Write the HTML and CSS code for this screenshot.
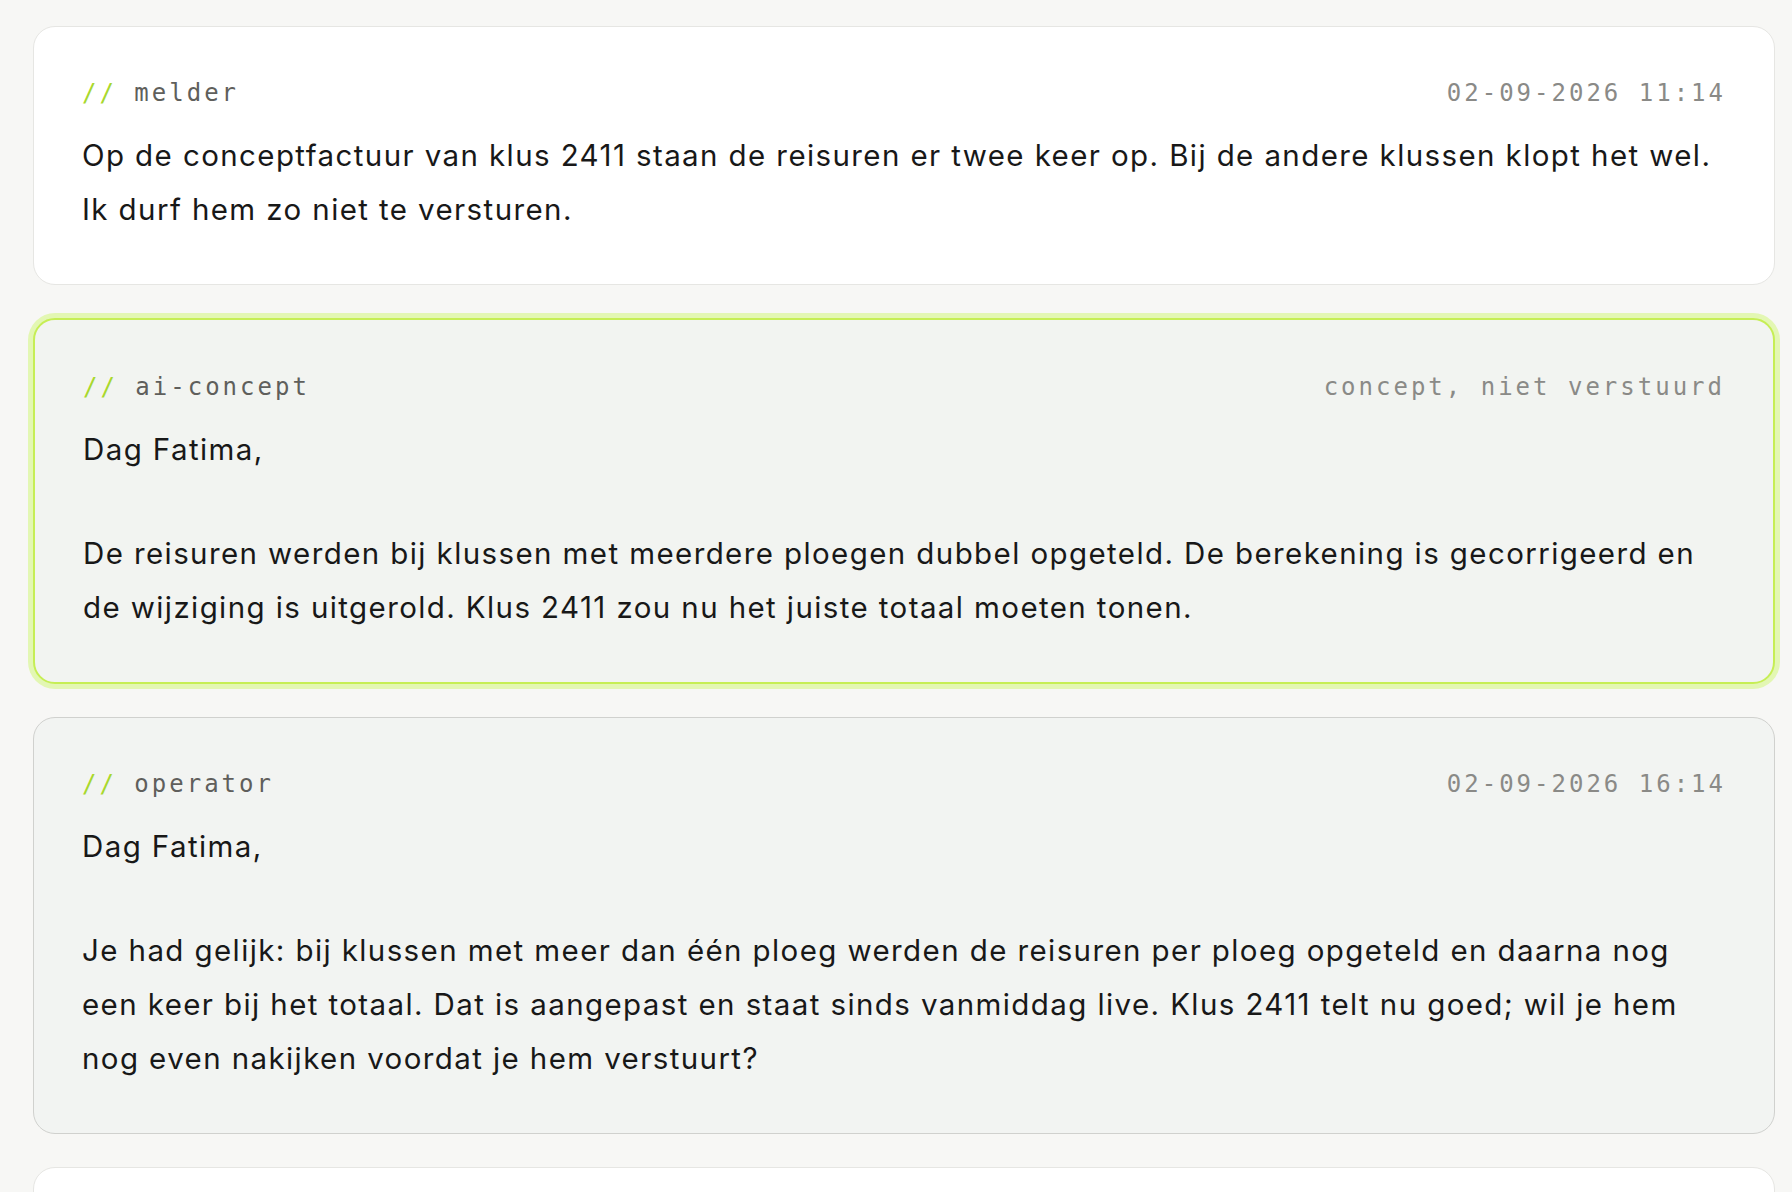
FILE: index.html
```html
<!DOCTYPE html>
<html lang="nl">
<head>
<meta charset="utf-8">
<title>Thread</title>
<link rel="stylesheet" href="styles.css">
</head>
<body>
<main class="thread">
  <article class="msg msg-reporter">
    <header class="msg-head">
      <span class="msg-role"><span class="slashes">//</span> melder</span>
      <span class="msg-meta">02-09-2026 11:14</span>
    </header>
    <div class="msg-body">
      <p>Op de conceptfactuur van klus 2411 staan de reisuren er twee keer op. Bij de andere klussen klopt het wel. Ik durf hem zo niet te versturen.</p>
    </div>
  </article>

  <article class="msg msg-draft">
    <header class="msg-head">
      <span class="msg-role"><span class="slashes">//</span> ai-concept</span>
      <span class="msg-meta">concept, niet verstuurd</span>
    </header>
    <div class="msg-body">
      <p>Dag Fatima,</p>
      <p>De reisuren werden bij klussen met meerdere ploegen dubbel opgeteld. De berekening is gecorrigeerd en de wijziging is uitgerold. Klus 2411 zou nu het juiste totaal moeten tonen.</p>
    </div>
  </article>

  <article class="msg msg-operator">
    <header class="msg-head">
      <span class="msg-role"><span class="slashes">//</span> operator</span>
      <span class="msg-meta">02-09-2026 16:14</span>
    </header>
    <div class="msg-body">
      <p>Dag Fatima,</p>
      <p>Je had gelijk: bij klussen met meer dan één ploeg werden de reisuren per ploeg opgeteld en daarna nog een keer bij het totaal. Dat is aangepast en staat sinds vanmiddag live. Klus 2411 telt nu goed; wil je hem nog even nakijken voordat je hem verstuurt?</p>
    </div>
  </article>

  <article class="msg msg-reporter">
    <header class="msg-head">
      <span class="msg-role"><span class="slashes">//</span> melder</span>
      <span class="msg-meta">02-09-2026 16:40</span>
    </header>
    <div class="msg-body">
      <p>Klopt nu, dank je.</p>
    </div>
  </article>
</main>
</body>
</html>
```

FILE: styles.css
```css
html, body {
  margin: 0;
  padding: 0;
  background: #f7f7f5;
  height: 100%;
  overflow: hidden;
}

body {
  font-family: "Inter", "Liberation Sans", sans-serif;
  color: #181818;
}

.thread {
  display: flex;
  flex-direction: column;
  gap: 33px;
  padding: 26px 17px 0 33px;
}

.msg {
  border-radius: 22px;
  padding: 48px;
  background: #ffffff;
  border: 1px solid #e6e6e3;
}

.msg-draft {
  background: #f2f4f1;
  border: 2px solid #c6ee55;
  box-shadow: 0 0 0 5px #e3f7b3;
  padding-top: 49px;
}

.msg-operator {
  background: #f2f4f2;
  border: 1px solid #d0d1ce;
}

.msg-head {
  display: flex;
  justify-content: space-between;
  align-items: center;
  font-family: "DejaVu Sans Mono", "Liberation Mono", monospace;
  font-size: 24px;
  line-height: 34px;
  letter-spacing: 3px;
  margin-bottom: 18px;
  padding-top: 1px;
}

.msg-role {
  color: #5f5f5c;
}

.slashes {
  color: #a8d82e;
}

.msg-meta {
  color: #8a8a87;
}

.msg-body {
  font-size: 29.5px;
  line-height: 54px;
  letter-spacing: 1.4px;
}

.msg-body p {
  margin: 0;
}

.msg-body p + p {
  margin-top: 50px;
}
```
